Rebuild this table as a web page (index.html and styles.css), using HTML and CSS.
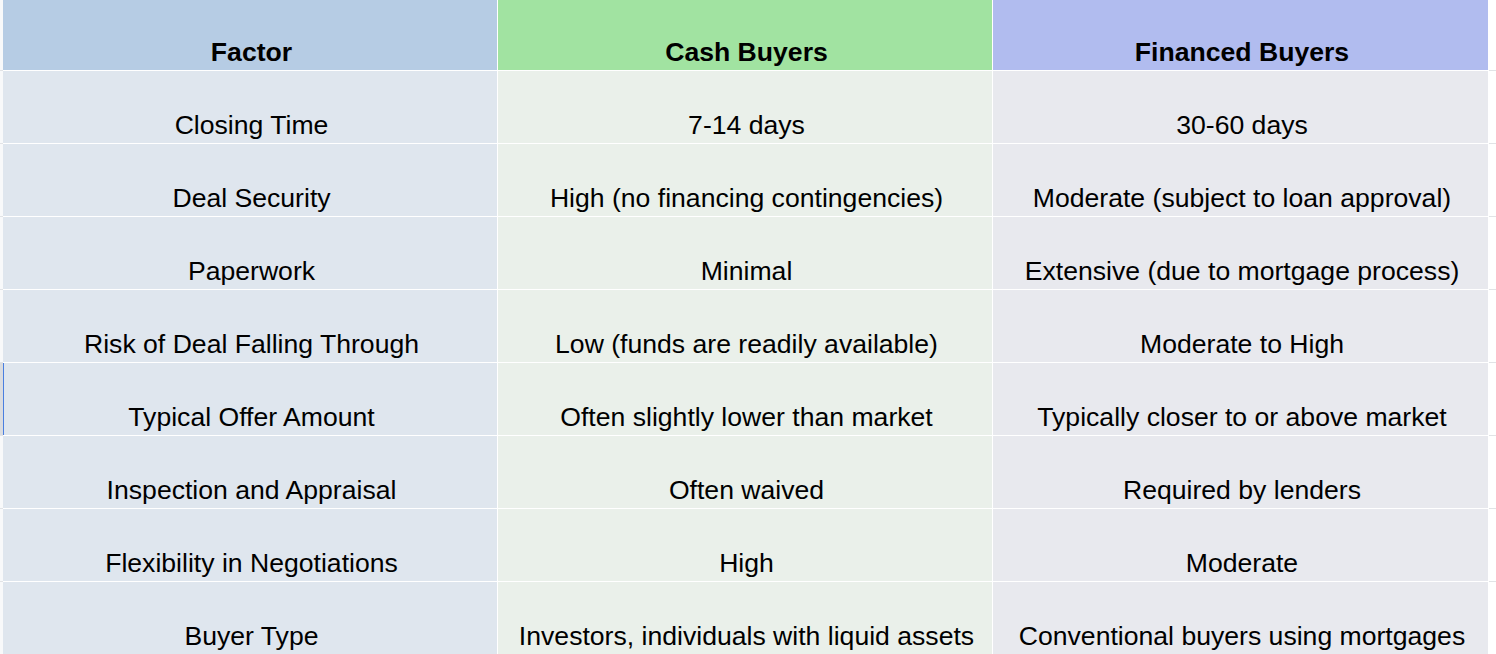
FILE: index.html
```html
<!DOCTYPE html>
<html lang="en">
<head>
<meta charset="utf-8">
<title>Cash vs Financed Buyers</title>
<link rel="stylesheet" href="styles.css">
</head>
<body>
<div class="sheet">
  <div class="gut"></div>
  <div class="cell head c1">Factor</div>
  <div class="cell head c2">Cash Buyers</div>
  <div class="cell head c3">Financed Buyers</div>
  <div class="edge"></div>

  <div class="gut"></div>
  <div class="cell c1">Closing Time</div>
  <div class="cell c2">7-14 days</div>
  <div class="cell c3">30-60 days</div>
  <div class="edge"></div>

  <div class="gut"></div>
  <div class="cell c1">Deal Security</div>
  <div class="cell c2">High (no financing contingencies)</div>
  <div class="cell c3">Moderate (subject to loan approval)</div>
  <div class="edge"></div>

  <div class="gut"></div>
  <div class="cell c1">Paperwork</div>
  <div class="cell c2">Minimal</div>
  <div class="cell c3">Extensive (due to mortgage process)</div>
  <div class="edge"></div>

  <div class="gut"></div>
  <div class="cell c1">Risk of Deal Falling Through</div>
  <div class="cell c2">Low (funds are readily available)</div>
  <div class="cell c3">Moderate to High</div>
  <div class="edge"></div>

  <div class="gut gut-sel"></div>
  <div class="cell c1 sel">Typical Offer Amount</div>
  <div class="cell c2">Often slightly lower than market</div>
  <div class="cell c3">Typically closer to or above market</div>
  <div class="edge"></div>

  <div class="gut"></div>
  <div class="cell c1">Inspection and Appraisal</div>
  <div class="cell c2">Often waived</div>
  <div class="cell c3">Required by lenders</div>
  <div class="edge"></div>

  <div class="gut"></div>
  <div class="cell c1">Flexibility in Negotiations</div>
  <div class="cell c2">High</div>
  <div class="cell c3">Moderate</div>
  <div class="edge"></div>

  <div class="gut"></div>
  <div class="cell c1">Buyer Type</div>
  <div class="cell c2">Investors, individuals with liquid assets</div>
  <div class="cell c3">Conventional buyers using mortgages</div>
  <div class="edge"></div>
</div>
</body>
</html>
```

FILE: styles.css
```css
* { box-sizing: border-box; }
html, body {
  margin: 0;
  padding: 0;
  background: #ffffff;
  overflow: hidden;
}
body {
  font-family: "Liberation Sans", Arial, sans-serif;
  color: #000;
}
.sheet {
  display: grid;
  grid-template-columns: 3px 495px 495px 496px 1fr;
  grid-template-rows: 71px repeat(8, 73px);
  width: 1496px;
}
.gut {
  background: #f8f9fa;
  border-bottom: 1px solid #e1e3e6;
}
.gut-sel {
  background: #dadce0;
}
.edge {
  background: #ffffff;
  border-bottom: 1px solid #e1e3e6;
}
.cell {
  display: flex;
  align-items: flex-end;
  justify-content: center;
  text-align: center;
  font-size: 26.6px;
  line-height: 31px;
  padding: 0 2px 2px 5px;
  border-bottom: 1px solid #ffffff;
  border-right: 1px solid #ffffff;
  white-space: nowrap;
}
.head { font-weight: bold; }
.c1 { background: #dfe6ee; }
.c2 { background: #eaf0ea; }
.c3 { background: #e8e9ee; }
.head.c1 { background: #b6cce4; }
.head.c2 { background: #a1e3a1; }
.head.c3 { background: #b1bcef; }
.sel { box-shadow: inset 1px 0 0 #4a7fe0; }
```
